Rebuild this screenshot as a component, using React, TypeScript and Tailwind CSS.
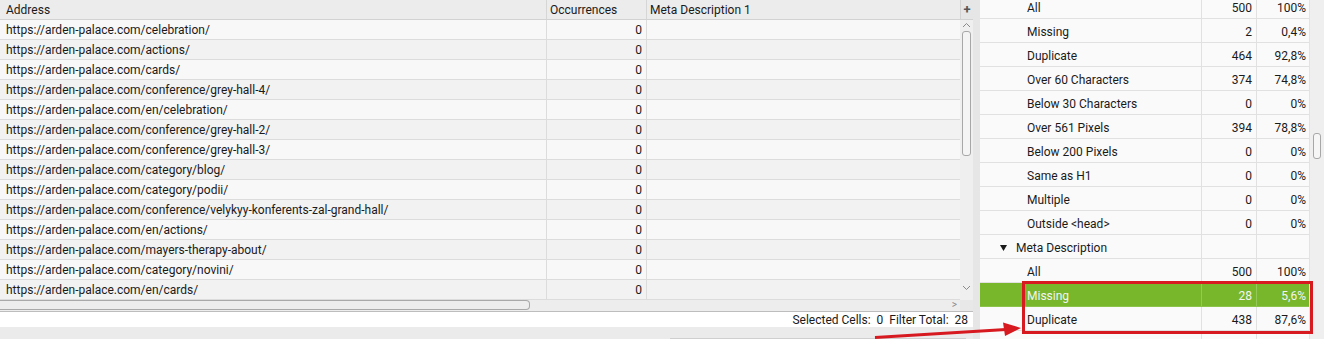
import React from 'react';

const URLS = [
  'https://arden-palace.com/celebration/',
  'https://arden-palace.com/actions/',
  'https://arden-palace.com/cards/',
  'https://arden-palace.com/conference/grey-hall-4/',
  'https://arden-palace.com/en/celebration/',
  'https://arden-palace.com/conference/grey-hall-2/',
  'https://arden-palace.com/conference/grey-hall-3/',
  'https://arden-palace.com/category/blog/',
  'https://arden-palace.com/category/podii/',
  'https://arden-palace.com/conference/velykyy-konferents-zal-grand-hall/',
  'https://arden-palace.com/en/actions/',
  'https://arden-palace.com/mayers-therapy-about/',
  'https://arden-palace.com/category/novini/',
  'https://arden-palace.com/en/cards/',
];

type Stat = { label: string; count?: string; pct?: string; group?: boolean; selected?: boolean };

const STATS: Stat[] = [
  { label: 'All', count: '500', pct: '100%' },
  { label: 'Missing', count: '2', pct: '0,4%' },
  { label: 'Duplicate', count: '464', pct: '92,8%' },
  { label: 'Over 60 Characters', count: '374', pct: '74,8%' },
  { label: 'Below 30 Characters', count: '0', pct: '0%' },
  { label: 'Over 561 Pixels', count: '394', pct: '78,8%' },
  { label: 'Below 200 Pixels', count: '0', pct: '0%' },
  { label: 'Same as H1', count: '0', pct: '0%' },
  { label: 'Multiple', count: '0', pct: '0%' },
  { label: 'Outside <head>', count: '0', pct: '0%' },
  { label: 'Meta Description', group: true },
  { label: 'All', count: '500', pct: '100%' },
  { label: 'Missing', count: '28', pct: '5,6%', selected: true },
  { label: 'Duplicate', count: '438', pct: '87,6%' },
  { label: '', count: '', pct: '' },
];

const DataTable: React.FC = () => (
  <div className="flex">
    <div className="w-[960px]">
      {/* header */}
      <div className="flex h-[20px] bg-[#ececec] border-b border-[#d2d2d2]">
        <div className="w-[547px] pl-[6px] pt-[2px] border-r border-[#d6d6d6] leading-[17px]">Address</div>
        <div className="w-[100px] pl-[3px] pt-[2px] border-r border-[#d6d6d6] leading-[17px]">Occurrences</div>
        <div className="flex-1 pl-[3px] pt-[2px] leading-[17px]">Meta Description 1</div>
      </div>
      {URLS.map((url, i) => (
        <div
          key={url}
          className={`flex h-[20px] border-b border-[#dcdcdc] ${i % 2 === 0 ? 'bg-[#f8f8f8]' : 'bg-[#f2f2f2]'}`}
        >
          <div className="w-[547px] pl-[6px] pt-[2px] border-r border-[#dcdcdc] leading-[17px] whitespace-nowrap">{url}</div>
          <div className="w-[100px] pr-[4px] pt-[2px] text-right border-r border-[#dcdcdc] leading-[17px]">0</div>
          <div className="flex-1" />
        </div>
      ))}
      {/* horizontal scrollbar */}
      <div className="relative flex h-[11px] bg-[#ededed]">
        <div className="w-[530px] h-[10px] border border-l-0 border-[#a9a9a9] rounded-r-[4px] bg-[#ededed]" />
        <span className="absolute right-[3px] top-[-2px] text-[10px] text-[#8a8a8a] leading-[14px]">&gt;</span>
      </div>
    </div>
    {/* vertical scrollbar */}
    <div className="w-[13px] flex flex-col bg-[#efefef]">
      <div className="h-[20px] bg-[#e6e6e6] border-b border-l border-[#d2d2d2] flex items-center justify-center text-[13px] font-bold text-[#555] leading-none">
        +
      </div>
      <div className="h-[11px] flex justify-center">
        <svg width="9" height="6" viewBox="0 0 9 6" className="mt-[2px]">
          <path d="M1 5 L4.5 1.5 L8 5" fill="none" stroke="#8a8a8a" strokeWidth="1" />
        </svg>
      </div>
      <div className="mx-[2px] h-[125px] rounded-[3px] border border-[#a7a7a7] bg-[#f4f4f4]" />
      <div className="flex-1" />
      <div className="h-[18px] flex justify-center">
        <svg width="9" height="6" viewBox="0 0 9 6" className="mt-[3px]">
          <path d="M1 1 L4.5 4.5 L8 1" fill="none" stroke="#8a8a8a" strokeWidth="1" />
        </svg>
      </div>
      <div className="h-[11px] bg-[#e8e8e8]" />
    </div>
  </div>
);

const StatsPanel: React.FC = () => (
  <div className="relative flex w-[344px] h-[339px] overflow-hidden bg-[#fafafa]">
    <div className="w-[329px] -mt-[5px]">
      {STATS.map((s, i) => (
        <div
          key={i}
          className={`flex h-[24px] border-b ${s.selected ? 'bg-[#78b72c] text-[#f4f4f4] border-[#8cc34a]' : 'border-[#e1e1e1]'}`}
        >
          <div className="w-[221px] pt-[3px] leading-[20px] whitespace-nowrap">
            {s.group ? (
              <span className="pl-[20px] flex items-center">
                <svg width="7" height="6" viewBox="0 0 7 6" className="mr-[9px]">
                  <path d="M0 0 H7 L3.5 6 Z" fill="#1a1a1a" />
                </svg>
                {s.label}
              </span>
            ) : (
              <span className="pl-[47px]">{s.label}</span>
            )}
          </div>
          <div className={`w-[55px] pr-[4px] pt-[3px] text-right leading-[20px] border-l ${s.selected ? 'border-[#94c95a]' : 'border-[#e1e1e1]'}`}>
            {s.count}
          </div>
          <div className={`w-[53px] pr-[3px] pt-[3px] text-right leading-[20px] border-l ${s.selected ? 'border-[#94c95a]' : 'border-[#e1e1e1]'}`}>
            {s.pct}
          </div>
        </div>
      ))}
    </div>
    {/* right scrollbar */}
    <div className="w-[15px] bg-[#efefef] border-l border-[#e3e3e3]">
      <div className="mt-[133px] mx-[3px] h-[26px] rounded-[3px] border border-[#a7a7a7] bg-[#f6f6f6]" />
    </div>
    {/* highlight box */}
    <div className="absolute left-[42px] top-[281px] w-[291px] h-[53px] border-[3px] border-[#d71920]" />
  </div>
);

export default function App() {
  return (
    <div
      className="relative flex w-[1324px] h-[339px] overflow-hidden bg-[#ebebeb] text-[12px] text-[#1a1a1a]"
      style={{ fontFamily: 'Roboto, "Liberation Sans", Arial, sans-serif' }}
    >
      <div className="w-[973px] flex flex-col">
        <DataTable />
        <div className="h-[16px] bg-white border-t border-[#bdbdbd] flex justify-end pr-[5px] pt-[1px] leading-[15px] whitespace-pre">
          Selected Cells:  0  Filter Total:  28
        </div>
        <div className="flex-1 bg-[#ebebeb] flex items-end">
          <div className="ml-[670px] w-[296px] h-[1px] bg-[#cfcfcf]" />
        </div>
      </div>
      <div className="w-[7px] bg-[#e6e6e6]" />
      <StatsPanel />
      {/* annotation arrow */}
      <svg className="absolute left-0 top-0 pointer-events-none" width="1324" height="339">
        <line x1="875" y1="337.5" x2="1006" y2="329.5" stroke="#d71920" strokeWidth="3" />
        <polygon points="1021,328 1003,322.5 1005,336" fill="#d71920" />
      </svg>
    </div>
  );
}
